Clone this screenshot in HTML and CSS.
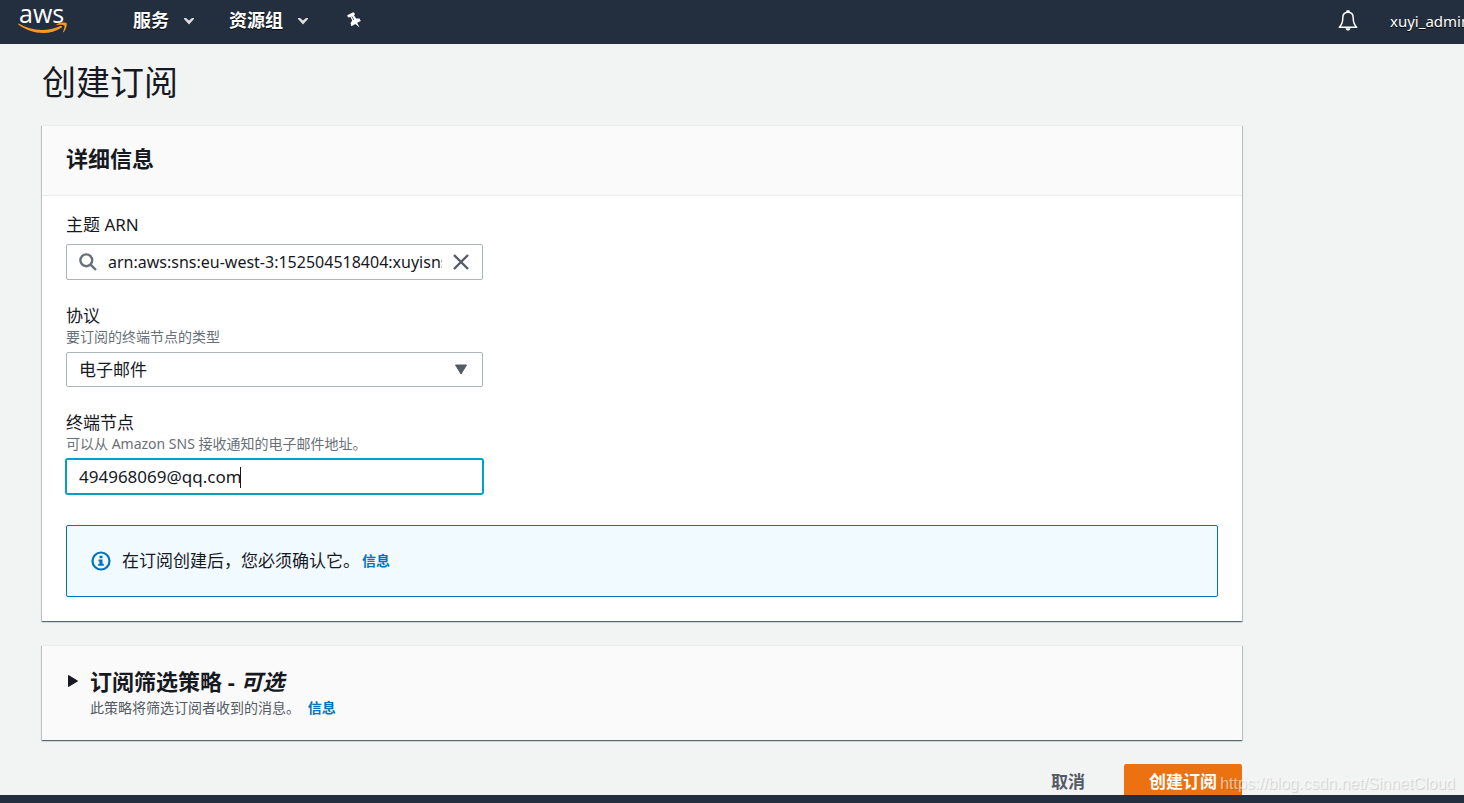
FILE: index.html
```html
<!DOCTYPE html>
<html lang="zh-CN">
<head>
<meta charset="utf-8">
<title>创建订阅</title>
<link rel="stylesheet" href="styles.css">
</head>
<body>
<div class="app">
  <header class="topbar">
    <a class="logo" href="#" aria-label="aws">
      <span class="logo-text">aws</span>
      <svg class="logo-smile" viewBox="0 0 50 13" width="50" height="13" aria-hidden="true">
        <path d="M.6 1.5C13 9.2 29 10 42.2 4.1c1.500-.7 2.500.7 1.200 1.700C31 14.300 12.500 12 .3 2.600-.2 2.100.1 1.300.6 1.500z" fill="#f7981f"/>
        <path d="M38.600 2.200c2.800-2 8.600-2.200 9.800-1.200 1.100 1-.2 6.400-2.700 9-.5.500-.9.200-.7-.3 1-2.300 1.900-5.400 1.300-6.300-.7-.9-4.600-.8-7.200-.5-.7 0-1-.4-.5-.7z" fill="#f7981f"/>
      </svg>
    </a>
    <nav class="nav">
      <button class="nav-item" type="button">服务
        <svg viewBox="0 0 10 7" width="10" height="7" aria-hidden="true"><path d="M0 0h2L5 2.500 8 0H10v1L5 6.500 0 1z" fill="#ddd"/></svg>
      </button>
      <button class="nav-item" type="button">资源组
        <svg viewBox="0 0 10 7" width="10" height="7" aria-hidden="true"><path d="M0 0h2L5 2.500 8 0H10v1L5 6.500 0 1z" fill="#ddd"/></svg>
      </button>
      <button class="icon-button pin" type="button" aria-label="固定">
        <svg viewBox="0 0 14 16" width="14" height="16" aria-hidden="true"><path d="M.2 3.300 6.300.2l1.700 1.500-.9 1.700 2 3 3.400.2 1.300 2.300-3.600 1.900 2.300 4.800-4.100-3.600-4 2.200-.9-2.900 1.700-2.800-1.700-3.500L1 5.400z" fill="#fff"/><path d="m4.800 4.300 2 3.700" stroke="#6b7480" stroke-width="1"/></svg>
      </button>
    </nav>
    <button class="icon-button bell" type="button" aria-label="通知">
      <svg viewBox="0 0 20 22" width="20" height="22" fill="none" stroke="#fff" stroke-width="1.500" stroke-linejoin="round" aria-hidden="true"><path d="M10 2.200c-3.500 0-5.200 2.300-5.200 5.600 0 4.700-.8 7-3.500 9.400h17.400c-2.700-2.400-3.500-4.700-3.500-9.400 0-3.300-1.700-5.600-5.200-5.600z"/><path d="M9 2.100V1h2v1.100" /><path d="M7.500 18.200h5c-.3 1.700-1.300 2.300-2.500 2.300s-2.200-.6-2.500-2.300z" fill="#fff" stroke="none"/></svg>
    </button>
    <a class="user" href="#">xuyi_admin</a>
  </header>

  <main class="content">
    <form class="page">
      <h1 class="title">创建订阅</h1>

      <section class="card">
        <header class="card-head"><h2 class="heading">详细信息</h2></header>
        <div class="card-body">
          <div class="field">
            <label class="label" for="arn">主题 ARN</label>
            <div class="control search">
              <svg viewBox="0 0 18 18" width="18" height="18" fill="none" stroke="#687078" stroke-width="2.400" aria-hidden="true"><circle cx="7.300" cy="7.300" r="5.900"/><path d="m11.600 11.600 5.400 5.400"/></svg>
              <input class="search-input" id="arn" type="text" value="arn:aws:sns:eu-west-3:152504518404:xuyisns">
              <button class="icon-button" type="button" aria-label="清除">
                <svg viewBox="0 0 16 16" width="16" height="16" stroke="#545b64" stroke-width="2.400" aria-hidden="true"><path d="m1 1 14 14M15 1 1 15"/></svg>
              </button>
            </div>
          </div>

          <div class="field">
            <label class="label" for="protocol">协议</label>
            <p class="hint">要订阅的终端节点的类型</p>
            <div class="input-wrap">
              <select class="control select" id="protocol"><option>电子邮件</option></select>
              <svg class="select-arrow" viewBox="0 0 14 11" width="14" height="11" aria-hidden="true"><path d="M1.500 1h11L7 10z" fill="#545b64" stroke="#545b64" stroke-linejoin="round"/></svg>
            </div>
          </div>

          <div class="field">
            <label class="label" for="endpoint">终端节点</label>
            <p class="hint">可以从 Amazon SNS 接收通知的电子邮件地址。</p>
            <div class="input-wrap">
              <input class="control endpoint" id="endpoint" type="text" value="494968069@qq.com">
              <span class="caret"></span>
            </div>
          </div>

          <div class="alert">
            <svg viewBox="0 0 20 20" width="20" height="20" aria-hidden="true"><circle cx="10" cy="10" r="8.500" fill="none" stroke="#0073bb" stroke-width="2.200"/><path d="M8.500 4.700h3v2.600h-3zM7.500 8.500h4v4.300h1.300v2H7.200v-2h1.300v-2.300h-1z" fill="#0073bb"/></svg>
            <p class="alert-text">在订阅创建后，您必须确认它。</p>
            <a class="info" href="#">信息</a>
          </div>
        </div>
      </section>

      <section class="card filter">
        <button class="icon-button expand" type="button" aria-label="展开">
          <svg viewBox="0 0 10 12" width="10" height="12" aria-hidden="true"><path d="M.5.500 9.500 6l-9 5.500z" fill="#16191f" stroke="#16191f" stroke-linejoin="round"/></svg>
        </button>
        <div>
          <h2 class="heading">订阅筛选策略 - <em>可选</em></h2>
          <p class="hint filter-hint">此策略将筛选订阅者收到的消息。 <a class="info" href="#">信息</a></p>
        </div>
      </section>

      <div class="actions">
        <button class="button" type="button">取消</button>
        <button class="button primary" type="submit">创建订阅</button>
      </div>
    </form>
  </main>
  <footer class="bottombar"></footer>
  <div class="watermark">https://blog.csdn.net/SinnetCloud</div>
</div>
</body>
</html>
```
FILE: styles.css
```css
* { box-sizing: border-box; }
body, h1, h2, p { margin: 0; }
body {
  background: #f2f3f3;
  color: #16191f;
  font-family: "Noto Sans", "Noto Sans CJK SC", sans-serif;
  font-size: 17px;
  line-height: 24px;
}
button, input, select { font: inherit; color: inherit; }
button { cursor: pointer; }
a { text-decoration: none; }
svg { display: block; flex: none; }

.app { position: relative; display: flex; flex-direction: column; height: 100vh; overflow: hidden; }

.topbar {
  display: flex;
  align-items: center;
  flex: none;
  height: 44px;
  padding-left: 18px;
  background: #232f3e;
  color: #fff;
  overflow: hidden;
}
.logo { display: flex; flex-direction: column; width: 50px; height: 44px; margin-right: 65px; color: #fff; }
.logo-text { padding-left: 1px; font-family: "Open Sans", sans-serif; font-size: 25px; font-weight: 500; line-height: 26px; }
.logo-smile { margin-top: -4px; }
.nav { display: flex; align-items: center; gap: 35px; flex: 1; padding-bottom: 4px; }
.nav-item {
  display: flex;
  align-items: center;
  gap: 15px;
  padding: 0;
  border: 0;
  background: none;
  font-size: 18px;
  font-weight: 700;
  text-shadow: 0 1px 0 #000;
}
.nav-item svg { margin-top: 3px; }
.icon-button { padding: 0; border: 0; background: none; }
.pin { margin-left: 4px; }
.bell { margin-right: 32px; padding-bottom: 2px; }
.user { width: 74px; padding-bottom: 2px; color: #fff; font-size: 15px; white-space: nowrap; text-shadow: 0 1px 0 #000; }

.content { flex: 1; min-height: 0; overflow: hidden; padding: 16px 42px 0; }
.page { max-width: 1200px; }
.title { margin-bottom: 21px; font-size: 34px; font-weight: 400; line-height: 44px; }
.card {
  margin-bottom: 24px;
  background: #fff;
  border-top: 1px solid #eaeded;
  box-shadow: 0 1px 1px 0 rgba(0, 28, 36, .5), 1px 1px 1px 0 rgba(0, 28, 36, .15), -1px 1px 1px 0 rgba(0, 28, 36, .15);
}
.card-head { padding: 17px 24px 22px; background: #fafafa; border-bottom: 1px solid #eaeded; }
.heading { font-size: 22px; font-weight: 700; line-height: 30px; }
.card-body { padding: 18px 24px 24px; }
.field { width: 417px; max-width: 100%; margin-bottom: 25px; }
.label { display: block; line-height: 22px; }
.hint { color: #687078; font-size: 14px; line-height: 20px; }
.control {
  width: 100%;
  height: 35px;
  border: 1px solid #aab7b8;
  border-radius: 2px;
  background: #fff;
  outline: 0;
}
.search { display: flex; align-items: center; gap: 11px; height: 36px; margin-top: 8px; padding: 0 13px 0 12px; }
.search-input { flex: 1; min-width: 0; padding: 0; border: 0; outline: 0; background: none; font-size: 16px; }
.input-wrap { position: relative; margin-top: 5px; }
.select { display: block; padding: 0 12px; appearance: none; }
.select-arrow { position: absolute; top: 12px; right: 15px; pointer-events: none; }
.endpoint { display: block; padding: 0 12px; border-color: #00a1c9; box-shadow: 0 0 0 1px #00a1c9; }
.caret { position: absolute; top: 8px; left: 174px; width: 1px; height: 21px; background: #16191f; }
.alert {
  display: flex;
  align-items: center;
  min-height: 72px;
  margin-top: 31px;
  padding: 0 24px;
  border: 1px solid #0073bb;
  border-radius: 2px;
  background: #f1faff;
}
.alert-text { margin: 0 2px 0 11px; }
.info { color: #0073bb; font-size: 14px; font-weight: 700; }

.filter { display: flex; align-items: flex-start; gap: 12px; padding: 20px 26px 22px; background: #fafafa; }
.expand { margin-top: 9px; }
.filter-hint { margin-top: 2px; color: #545b64; }
.filter-hint .info { margin-left: 4px; }
.actions { display: flex; justify-content: flex-end; gap: 14px; }
.button {
  padding: 6px 25px;
  border: 0;
  border-radius: 2px;
  background: none;
  color: #545b64;
  font-weight: 700;
}
.primary { background: #ec7211; color: #fff; }
.bottombar { flex: none; height: 8px; background: #232f3e; }
.watermark {
  position: absolute;
  right: 9px;
  bottom: 7px;
  color: rgba(255, 255, 255, .6);
  font-family: "Liberation Sans", sans-serif;
  font-size: 16px;
  text-shadow: 1px 1px 1px rgba(0, 0, 0, .15);
}
```
